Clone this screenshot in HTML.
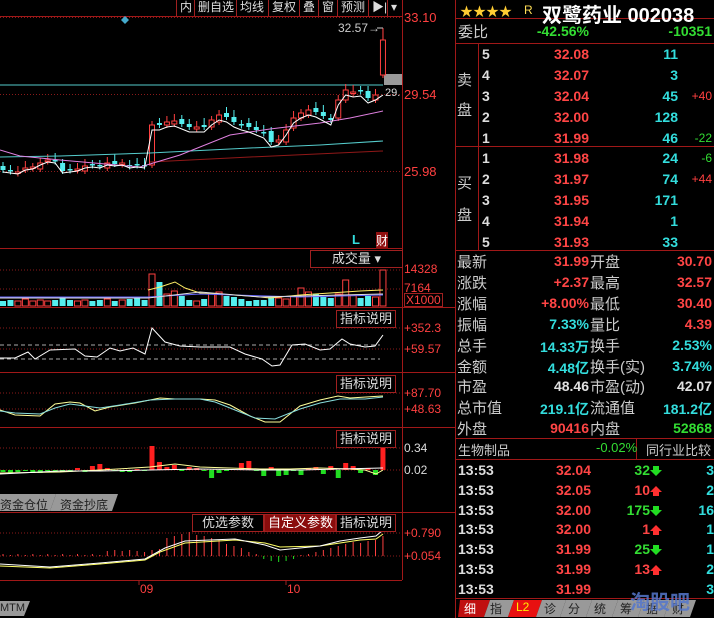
<!DOCTYPE html>
<html><head><meta charset="utf-8"><style>
*{margin:0;padding:0;box-sizing:border-box}
body{width:714px;height:618px;background:#000;overflow:hidden;position:relative;font-family:"Liberation Sans","Noto Sans CJK SC",sans-serif;color:#ccc}
.a{position:absolute;white-space:nowrap}
.r{color:#ff4545}.c{color:#33dddd}.g{color:#33dd33}.w{color:#e0e0e0}.dr{color:#c03030}
.row{position:absolute;left:456px;width:258px;height:20px;font-size:15px}
.num{font-weight:bold;font-size:14px;position:absolute;text-align:right;top:2px;white-space:nowrap}
.tb{position:absolute;top:0;height:16px;font-size:12px;color:#ddd;border-left:1px solid #a02020;padding:0 3px;line-height:15px;background:#000;white-space:nowrap}
.ib{position:absolute;height:18px;font-size:13px;color:#ddd;border:1px solid #a02020;padding:0 3px;line-height:16px;background:#000;white-space:nowrap;text-align:center}
.ax{position:absolute;left:404px;font-size:12px;color:#ff4040;white-space:nowrap}
</style></head><body>
<svg class="a" style="left:0;top:0" width="714" height="618" id="s">
<g stroke="#a01818" fill="none">
<line x1="402.5" y1="0" x2="402.5" y2="580"/>
<line x1="455.5" y1="0" x2="455.5" y2="618"/>
<line x1="0" y1="248.5" x2="402" y2="248.5"/>
<line x1="0" y1="307.5" x2="455" y2="307.5"/>
<line x1="0" y1="372.5" x2="455" y2="372.5"/>
<line x1="0" y1="427.5" x2="455" y2="427.5"/>
<line x1="0" y1="512.5" x2="455" y2="512.5"/>
<line x1="0" y1="580.5" x2="402" y2="580.5"/>
<line x1="456" y1="18.5" x2="714" y2="18.5"/>
<line x1="456" y1="43.5" x2="714" y2="43.5"/>
<line x1="456" y1="146.5" x2="714" y2="146.5"/>
<line x1="456" y1="250.5" x2="714" y2="250.5"/>
<line x1="456" y1="438.5" x2="714" y2="438.5"/>
<line x1="456" y1="459.5" x2="714" y2="459.5"/>
<line x1="456" y1="598.5" x2="714" y2="598.5"/>
<line x1="478.5" y1="43" x2="478.5" y2="250"/>
<line x1="636.5" y1="438" x2="636.5" y2="459"/>
<line x1="0" y1="16.5" x2="402" y2="16.5"/>
</g>
<g stroke="#8a1a1a" stroke-dasharray="1,2">
<line x1="0" y1="17.5" x2="402" y2="17.5"/><line x1="0" y1="94.5" x2="402" y2="94.5"/><line x1="0" y1="171.5" x2="402" y2="171.5"/>
<line x1="0" y1="270" x2="402" y2="270"/><line x1="0" y1="289" x2="402" y2="289"/>
<line x1="0" y1="328" x2="402" y2="328"/><line x1="0" y1="349" x2="402" y2="349"/>
<line x1="0" y1="393" x2="402" y2="393"/><line x1="0" y1="409" x2="402" y2="409"/>
<line x1="0" y1="448" x2="402" y2="448"/><line x1="0" y1="470" x2="402" y2="470"/>
<line x1="0" y1="533" x2="402" y2="533"/><line x1="0" y1="556" x2="402" y2="556"/>
</g>
<g stroke="#aaa" stroke-dasharray="4,3"><line x1="0" y1="345" x2="380" y2="345"/><line x1="0" y1="359" x2="380" y2="359"/></g>
<line x1="0" y1="85" x2="383" y2="85" stroke="#55cccc"/>
<rect x="384" y="74" width="18" height="11" fill="#999"/>
<polygon points="125,16 129,20 125,24 121,20" fill="#44aacc"/>
<g id="cd"></g>
<polyline points="0,157 60,156 150,153 250,148 320,145 383,141" fill="none" stroke="#55cccc"/>
<polyline points="150,162 250,157 383,151" fill="none" stroke="#901818"/>
<polyline points="0,150 20,156 60,160 140,167 180,155 230,135 270,129 320,123 350,118 383,111" fill="none" stroke="#e080e0"/>
<polyline id="ma5" fill="none" stroke="#fff"/>
<line x1="377" y1="28" x2="383" y2="28" stroke="#ccc"/>
<g id="vol"></g>
<polyline points="148,290 160,287 175,282 185,288 200,293 250,296 270,298 300,295 330,293 360,291 383,290" fill="none" stroke="#ffee66"/>
<polyline points="0,297 148,297 200,294 300,297 383,295" fill="none" stroke="#6666ff"/>
<polyline points="0,298 100,298 148,298 200,292 260,297 383,294" fill="none" stroke="#e0e0e0"/>
<polyline points="0,358 15,358 28,352 35,359 50,350 75,349 85,356 97,357 110,348 120,351 133,348 145,354 152,328 165,342 180,346 200,347 230,347 245,354 262,359 272,366 280,365 292,345 305,344 320,350 330,349 342,339 350,344 365,347 375,346 383,335" fill="none" stroke="#fff"/>
<polyline points="0,410 15,415 40,416 55,404 70,402 80,403 95,411 110,407 135,403 160,398 175,399 200,399 215,400 230,405 250,416 265,422 280,422 300,406 320,400 338,396 350,398 383,396" fill="none" stroke="#ffff99"/>
<polyline points="0,411 15,413 40,414 55,408 70,404 85,406 100,408 120,405 150,400 175,399 200,399 215,402 235,410 255,418 275,419 300,409 320,403 340,399 365,399 383,397" fill="none" stroke="#88dddd"/>
<g id="mb"></g>
<polyline points="0,473 60,472 100,470 150,467 175,464 200,467 260,469 290,469 320,468 350,469 365,470 376,474 383,470" fill="none" stroke="#ffff99"/>
<polyline points="0,474 60,471 100,471 150,470 200,469 260,470 300,470 340,469 383,468" fill="none" stroke="#fff"/>
<g id="bb"></g>
<polyline points="0,566 50,568 100,564 145,560 160,552 185,543 235,540 265,543 280,547 320,546 340,543 360,540 376,539 383,534" fill="none" stroke="#ffff66"/>
<polyline points="0,564 50,567 100,563 145,559 165,548 185,541 235,539 265,545 280,550 320,546 340,541 360,538 376,536 383,530" fill="none" stroke="#fff"/>
<line x1="139" y1="580" x2="139" y2="585" stroke="#a02020"/><line x1="286" y1="580" x2="286" y2="585" stroke="#a02020"/>
<polygon points="0,494 50,494 56,494 50,511 0,511" fill="#999"/>
<polygon points="56,494 118,494 112,511 50,511" fill="#999"/>
<polygon points="0,601 30,601 24,616 0,616" fill="#999"/>
<g>
<polygon points="460,600 490,600 484,617 458,617" fill="#c01010"/>
<polygon points="490,600 514,600 508,617 484,617" fill="#999"/>
<polygon points="514,600 542,600 536,617 508,617" fill="#e81010"/>
<polygon points="542,600 566,600 560,617 536,617" fill="#999"/>
<polygon points="566,600 592,600 586,617 560,617" fill="#999"/>
<polygon points="592,600 618,600 612,617 586,617" fill="#999"/>
<polygon points="618,600 644,600 638,617 612,617" fill="#999"/>
<polygon points="644,600 670,600 664,617 638,617" fill="#999"/>
<polygon points="670,600 696,600 690,617 664,617" fill="#999"/>
</g>
<g id="arr"></g>
</svg>
<script>
var cl=[170,171,172,168,167,163,160,161,171,170,169,166,165,166,163,164,163,166,165,166,125,125,122,121,124,127,127,127,120,115,117,122,125,127,130,133,142,140,130,118,113,110,112,116,120,100,90,92,91,98,95,40];
var s='',v='',m='',b='',pts=[],p=168;
for(var i=0;i<cl.length;i++){var x=3+i*7.45,c=cl[i],o=(i==20?165:i==51?75:p+((i%3)-1)*2);
var up=c<=o,col=up?'#ff4040':'#55eeee',t=Math.min(o,c),h=Math.max(Math.abs(o-c),1.5);
s+='<line x1="'+x+'" y1="'+(t-4-(i==51?8:i%4))+'" x2="'+x+'" y2="'+(t+h+3)+'" stroke="'+col+'"/>';
s+='<rect x="'+(x-2.5)+'" y="'+t+'" width="5" height="'+h+'" '+(up?'fill="#000" stroke="'+col+'"':'fill="'+col+'"')+'/>';
var vh=[5,6,5,7,5,6,5,6,8,6,5,6,5,6,7,5,6,7,8,6,32,24,12,15,10,6,5,7,12,14,10,9,7,5,6,6,9,8,7,10,18,14,12,9,8,12,26,11,8,10,9,36][i];
v+='<rect x="'+(x-3)+'" y="'+(306-vh)+'" width="6" height="'+vh+'" '+(up?'fill="#000" stroke="#ff4040"':'fill="#55eeee"')+'/>';
var mh=[-2,-3,-2,-1,-3,-3,-1,-2,-1,-2,2,-2,4,6,2,-1,-2,-2,1,-1,24,8,3,5,-1,3,2,-1,-8,-3,-1,0,7,9,-1,-6,3,-6,-5,-1,-5,2,3,-4,4,-8,7,4,-3,2,-5,24][i];
if(mh>0)m+='<rect x="'+(x-2.5)+'" y="'+(470-mh)+'" width="5" height="'+mh+'" fill="#ff2020"/>';else m+='<rect x="'+(x-2.5)+'" y="470" width="5" height="'+(-mh)+'" fill="#22dd22"/>';
var bh=i<14?(i%2?1:2):i<42?[5,6,5,6,5,4,6,7,18,20,22,24,21,20,18,16,12,10,8,4,2,-3,-5,-6,-5,-3,1,2][i-14]:[4,6,8,10,12,14,13,15,16,20][i-42];
b+='<line x1="'+x+'" y1="556" x2="'+x+'" y2="'+(556-bh)+'" stroke="'+(bh>0?'#ff4040':'#22dd22')+'"/>';
pts.push(x+','+(i<20?c+2:i<51?c+5:95));p=c;}
document.getElementById('cd').innerHTML=s+'<line x1="383" y1="28" x2="383" y2="40" stroke="#ff4040"/>';
document.getElementById('vol').innerHTML=v;document.getElementById('mb').innerHTML=m;document.getElementById('bb').innerHTML=b;
document.getElementById('ma5').setAttribute('points',pts.join(' '));
var a='',ys=[469,489,509,528,548,568],up=[0,1,0,1,0,1];
for(var k=0;k<6;k++){var y=ys[k]+2;a+=up[k]?'<polygon points="656,'+(y-5)+' 662,'+(y+1)+' 659,'+(y+1)+' 659,'+(y+5)+' 653,'+(y+5)+' 653,'+(y+1)+' 650,'+(y+1)+'" fill="#ff3030"/>':'<polygon points="656,'+(y+5)+' 662,'+(y-1)+' 659,'+(y-1)+' 659,'+(y-5)+' 653,'+(y-5)+' 653,'+(y-1)+' 650,'+(y-1)+'" fill="#22dd22"/>';}
document.getElementById('arr').innerHTML=a;
</script>
<div class="tb" style="left:176px">内</div><div class="tb" style="left:194px">删自选</div><div class="tb" style="left:236px">均线</div><div class="tb" style="left:268px">复权</div><div class="tb" style="left:299px">叠</div><div class="tb" style="left:318px">窗</div><div class="tb" style="left:337px">预测</div><div class="tb" style="left:368px">▶|</div><div class="tb" style="left:387px">▾</div>
<div class="a" style="left:338px;top:21px;font-size:12px;color:#ccc">32.57→</div>
<div class="a" style="left:385px;top:87px;font-size:11px;color:#ddd">29.</div>
<div class="a" style="left:352px;top:232px;font-size:13px;color:#33dddd;font-weight:bold">L</div>
<div class="a" style="left:376px;top:232px;font-size:12px;color:#fff;background:#901010">财</div>
<div class="ax" style="top:10px;font-size:13px">33.10</div><div class="ax" style="top:87px;font-size:13px">29.54</div><div class="ax" style="top:164px;font-size:13px">25.98</div>
<div class="ib" style="left:310px;top:250px;width:93px">成交量 ▾</div>
<div class="ax" style="top:262px">14328</div><div class="ax" style="top:281px">7164</div><div class="ax" style="top:293px;border:1px solid #a02020;padding:0 1px;line-height:12px">X1000</div>
<div class="ib" style="left:336px;top:310px">指标说明</div><div class="ax" style="top:321px">+352.3</div><div class="ax" style="top:342px">+59.57</div>
<div class="ib" style="left:336px;top:375px">指标说明</div><div class="ax" style="top:386px">+87.70</div><div class="ax" style="top:402px">+48.63</div>
<div class="ib" style="left:336px;top:430px">指标说明</div><div class="ax" style="top:441px;color:#ddd">0.34</div><div class="ax" style="top:463px;color:#ddd">0.02</div>
<div class="a" style="left:0;top:496px;font-size:12px;color:#222">资金仓位</div><div class="a" style="left:60px;top:496px;font-size:12px;color:#222">资金抄底</div>
<div class="ib" style="left:192px;top:514px;width:72px">优选参数</div><div class="ib" style="left:264px;top:514px;width:72px;background:#8a0c0c;color:#fff">自定义参数</div><div class="ib" style="left:336px;top:514px">指标说明</div>
<div class="ax" style="top:526px">+0.790</div><div class="ax" style="top:549px">+0.054</div>
<div class="a" style="left:140px;top:582px;font-size:12px;color:#ff4040">09</div><div class="a" style="left:287px;top:582px;font-size:12px;color:#ff4040">10</div>
<div class="a" style="left:0;top:602px;font-size:11px;color:#222">MTM</div>
<div class="a" style="left:460px;top:1px;font-size:13px;color:#ffcc33">★★★★</div>
<div class="a" style="left:524px;top:3px;font-size:12px;color:#ffdd55">R</div>
<div class="a" style="left:542px;top:-1px;font-size:20px;font-weight:bold;color:#fff">双鹭药业 002038</div>
<div class="row" style="top:21px"><span class="a" style="left:2px">委比</span><span class="num g" style="right:125px">-42.56%</span><span class="num g" style="right:2px">-10351</span></div>
<div class="a" style="left:457px;top:66px;font-size:15px;line-height:30px">卖<br>盘</div>
<div class="a" style="left:457px;top:168px;font-size:15px;line-height:32px">买<br>盘</div>
<div id="ob"></div>
<script>
var d=[[5,'32.08','11',''],[4,'32.07','3',''],[3,'32.04','45','+40'],[2,'32.00','128',''],[1,'31.99','46','-22'],[1,'31.98','24','-6'],[2,'31.97','74','+44'],[3,'31.95','171',''],[4,'31.94','1',''],[5,'31.93','33','']],h='';
for(var i=0;i<10;i++){var t=44+i*21+(i>=5?-1:0);h+='<div class="row" style="top:'+t+'px"><span class="num w" style="left:26px;color:#ddd">'+d[i][0]+'</span><span class="num r" style="right:125px">'+d[i][1]+'</span><span class="num c" style="right:36px">'+d[i][2]+'</span><span class="a" style="right:2px;font-size:12px;top:3px;color:'+(d[i][3][0]=='+'?'#ff4040':'#33dd33')+'">'+d[i][3]+'</span></div>';}
var st=[['最新','31.99','r','开盘','30.70','r'],['涨跌','+2.37','r','最高','32.57','r'],['涨幅','+8.00%','r','最低','30.40','r'],['振幅','7.33%','c','量比','4.39','r'],['总手','14.33万','c','换手','2.53%','c'],['金额','4.48亿','c','换手(实)','3.74%','c'],['市盈','48.46','w','市盈(动)','42.07','w'],['总市值','219.1亿','c','流通值','181.2亿','c'],['外盘','90416','r','内盘','52868','g']];
for(var i=0;i<9;i++){var t=251+i*20.9;h+='<div class="row" style="top:'+t+'px"><span class="a" style="left:1px">'+st[i][0]+'</span><span class="num '+st[i][2]+'" style="right:125px">'+st[i][1]+'</span><span class="a" style="left:134px">'+st[i][3]+'</span><span class="num '+st[i][5]+'" style="right:2px">'+st[i][4]+'</span></div>';}
h+='<div class="row" style="top:440px;font-size:13px"><span class="a" style="left:2px">生物制品</span><span class="a g" style="left:140px">-0.02%</span><span class="a" style="left:190px">同行业比较</span></div>';
var tr=[['32.04','32','g','3'],['32.05','10','r','2'],['32.00','175','g','16'],['32.00','1','r','1'],['31.99','25','g','1'],['31.99','13','r','2'],['31.99','','r','3']];
for(var i=0;i<7;i++){var t=460+i*19.8;h+='<div class="row" style="top:'+t+'px"><span class="num" style="left:2px;color:#ddd">13:53</span><span class="num r" style="right:123px">'+tr[i][0]+'</span><span class="num '+tr[i][2]+'" style="right:64px">'+tr[i][1]+'</span><span class="num c" style="right:0px">'+tr[i][3]+'</span></div>';}
var tb=['细','指','L2','诊','分','统','筹','据','财'],xs=[464,490,516,544,568,594,620,646,672];
for(var i=0;i<9;i++)h+='<div class="a" style="left:'+xs[i]+'px;top:600px;font-size:12px;color:'+(i==2?'#ffee00':i==0?'#fff':'#222')+'">'+tb[i]+'</div>';
h+='<div class="a" style="left:630px;top:586px;font-size:20px;font-weight:bold;color:#5577cc;opacity:.85">淘股吧</div>';
document.getElementById('ob').innerHTML=h;
</script>
</body></html>
